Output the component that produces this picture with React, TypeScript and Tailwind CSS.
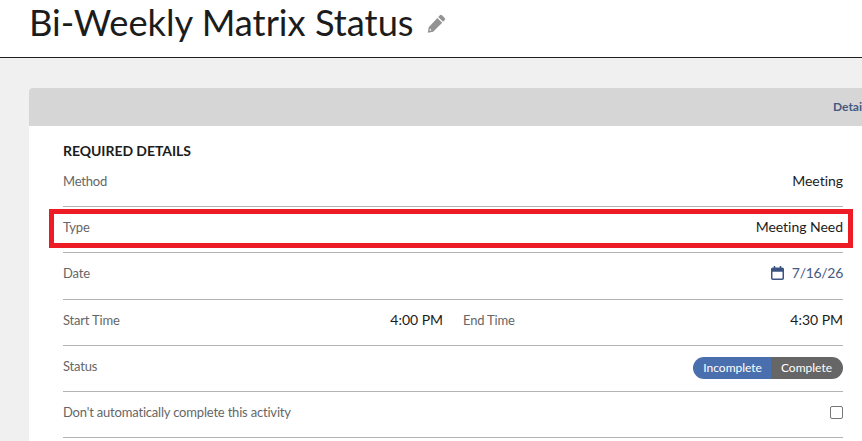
import React from 'react';

const Row: React.FC<{ children: React.ReactNode; className?: string }> = ({ children, className = 'h-[46px]' }) => (
  <div className={`flex items-start border-b border-[#b3b3b3] pt-[11px] ${className}`}>{children}</div>
);

const Label: React.FC<{ children: React.ReactNode }> = ({ children }) => (
  <span className="text-[13px] leading-[18px] tracking-[-0.19px] text-[#666666]">{children}</span>
);

const Value: React.FC<{ children: React.ReactNode }> = ({ children }) => (
  <span className="ml-auto text-[14px] leading-[18px] tracking-[-0.03px] text-[#1c1c1c]">{children}</span>
);

const App: React.FC = () => {
  return (
    <div className="relative h-[441px] w-[862px] overflow-hidden bg-[#f0f0f0] font-['Lato',sans-serif]">
      <div className="flex h-[58px] items-start border-b border-[#1f1f1f] bg-white pl-[29px]">
        <h1 className="text-[36.3px] leading-[44px] font-normal text-[#1c1c1c]">Bi-Weekly Matrix Status</h1>
        <svg className="ml-[13px] mt-[14px] h-[19px] w-[19px]" viewBox="0 0 20 20" fill="#939393">
          <path d="M13.6 1.3a1.6 1.6 0 0 1 2.2 0l2.9 2.9a1.6 1.6 0 0 1 0 2.2l-1.8 1.8-5.1-5.1z" />
          <path d="M10.9 4.1l5.1 5.1-9.5 9.5-5.7 1.1 1-5.8zM3.2 15.2l-.6 2.3 2.2-.5z" fillRule="evenodd" />
        </svg>
      </div>
      <div className="ml-[29px] mt-[30px] w-[833px] rounded-tl-[4px] bg-white">
        <div className="h-[38px] rounded-tl-[4px] bg-[#d6d6d6] pl-[804px] pt-[10px] text-[12px] leading-[18px] font-bold whitespace-nowrap text-[#46597f]">
          Details
        </div>
        <div className="pb-[8px] pl-[34px] pr-[19px] pt-[16px]">
          <h2 className="mb-px text-[14px] leading-[18px] font-bold tracking-[-0.05px] text-[#1c1c1c]">REQUIRED DETAILS</h2>
          <Row>
            <Label>Method</Label>
            <Value>Meeting</Value>
          </Row>
          <Row>
            <Label>Type</Label>
            <Value>Meeting Need</Value>
          </Row>
          <Row className="h-[47px]">
            <Label>Date</Label>
            <span className="ml-auto flex items-center text-[14px] leading-[18px] tracking-[-0.3px] text-[#46597f]">
              <svg className="mr-[8px] h-[14px] w-[13px]" viewBox="0 0 13 14" fill="none" stroke="#3a5482" strokeWidth="1.5">
                <rect x="0.75" y="2.25" width="11.5" height="11" rx="1" />
                <path d="M0.75 4h11.5" strokeWidth="3.5" />
                <path d="M3.5 0v3M9.5 0v3" />
              </svg>
              7/16/26
            </span>
          </Row>
          <Row>
            <div className="flex w-[380px]">
              <Label>Start Time</Label>
              <Value>4:00 PM</Value>
            </div>
            <div className="ml-[20px] flex flex-1">
              <Label>End Time</Label>
              <Value>4:30 PM</Value>
            </div>
          </Row>
          <Row>
            <Label>Status</Label>
            <div className="ml-auto flex h-[22px] overflow-hidden rounded-full text-[12px] leading-[22px] text-white">
              <span className="bg-[#4a6fae] pl-[10px] pr-[9px]">Incomplete</span>
              <span className="bg-[#666666] pl-[10px] pr-[11px]">Complete</span>
            </div>
          </Row>
          <Row>
            <Label>Don't automatically complete this activity</Label>
            <span className="ml-auto mt-[3px] h-[13px] w-[13px] rounded-[2px] border border-[#767676] bg-white" />
          </Row>
        </div>
      </div>
      <div className="absolute left-[49px] top-[209px] h-[39px] w-[804px] border-[5px] border-[#ed1c24]" />
    </div>
  );
};

export default App;
